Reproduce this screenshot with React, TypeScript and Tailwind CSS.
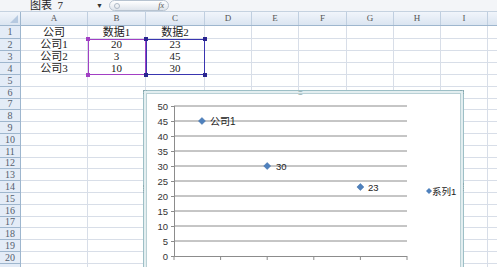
import React from "react";

const cols = [
  { key: "A", w: 67 },
  { key: "B", w: 58 },
  { key: "C", w: 59 },
  { key: "D", w: 47 },
  { key: "E", w: 47 },
  { key: "F", w: 48 },
  { key: "G", w: 47 },
  { key: "H", w: 47 },
  { key: "I", w: 47 },
  { key: "", w: 40 },
];

const rowHeights = [13, 12, 12, 12, 12, 12, 11, 12, 12, 12, 12, 11, 12, 12, 12, 12, 11, 12, 12, 12, 12];

const data: Record<number, string[]> = {
  1: ["公司", "数据1", "数据2"],
  2: ["公司1", "20", "23"],
  3: ["公司2", "3", "45"],
  4: ["公司3", "10", "30"],
};

const cellFont = { fontFamily: '"Liberation Serif", "Noto Sans CJK SC", serif' };

function TopBar() {
  return (
    <div className="flex h-[12px] items-center border-b border-[#c5d2e0] bg-[#f3f5f8]">
      <div className="ml-[30px] w-[62px] text-[11px] leading-none text-[#222]" style={cellFont}>
        图表&nbsp;&nbsp;7
      </div>
      <div className="ml-[4px] text-[7px] leading-none text-[#333]">▼</div>
      <div className="ml-[6px] flex h-[11px] w-[60px] items-center justify-between rounded-full border border-[#b7c3d0] bg-gradient-to-b from-white to-[#dfe5ec] px-[4px]">
        <span className="h-[6px] w-[6px] rounded-full border border-[#aeb9c6]"></span>
        <span className="text-[8px] italic leading-none text-[#555]" style={cellFont}>
          fx
        </span>
      </div>
    </div>
  );
}

function HeaderRow() {
  return (
    <div className="flex h-[14px] border-b border-[#9eb6ce] bg-gradient-to-b from-[#f1f5fb] to-[#dbe5f1]">
      <div className="flex w-[21px] shrink-0 items-end justify-end border-r border-[#9eb6ce] p-[2px]">
        <svg width="8" height="8">
          <polygon points="8,0 8,8 0,8" fill="#b6c9e0" />
        </svg>
      </div>
      {cols.map((c) => (
        <div
          key={c.key || "x"}
          className="flex shrink-0 items-center justify-center border-r border-[#c0cfe0] text-[9px] leading-none text-[#555]"
          style={{ ...cellFont, width: c.w }}
        >
          {c.key}
        </div>
      ))}
    </div>
  );
}

function Rows() {
  return (
    <div>
      {rowHeights.map((h, i) => {
        const r = i + 1;
        const vals = data[r] || [];
        return (
          <div key={r} className="flex" style={{ height: h }}>
            <div
              className="flex w-[21px] shrink-0 items-center justify-center border-b border-r border-[#9eb6ce] bg-[#e4ecf7] text-[10px] leading-none text-[#55606e]"
              style={cellFont}
            >
              {r <= 20 ? r : ""}
            </div>
            {cols.map((c, ci) => (
              <div
                key={ci}
                className="flex shrink-0 items-center justify-center border-b border-r border-[#d8dee8] text-[11px] leading-none text-[#1a1a1a]"
                style={{ ...cellFont, width: c.w }}
              >
                {vals[ci] ?? ""}
              </div>
            ))}
          </div>
        );
      })}
    </div>
  );
}

function Handle({ className }: { className: string }) {
  return <div className={"absolute h-[4px] w-[4px] " + className} />;
}

function Chart() {
  const yv = (v: number) => 163 - 3 * v;
  const xv = (v: number) => 28 + 9.32 * v;
  const grid = [5, 10, 15, 20, 25, 30, 35, 40, 45, 50];
  const font = '"Liberation Sans", "Noto Sans CJK SC", sans-serif';
  const diamond = (x: number, y: number, s = 3.5) =>
    `${x},${y - s} ${x + s},${y} ${x},${y + s} ${x - s},${y}`;
  return (
    <div className="absolute left-[143px] top-[90px] h-[200px] w-[321px] border border-[#9dbfc6] bg-[#e3eef0] p-[2px]">
      <div className="relative h-full w-full border border-[#b9d0d5] bg-white">
        <svg width="316" height="196" className="absolute left-[-1px] top-[-1px]">
          {grid.map((g) => (
            <line key={g} x1="28" x2="261" y1={yv(g)} y2={yv(g)} stroke="#8c8c8c" strokeWidth="1" />
          ))}
          <line x1="28" x2="261" y1="163.5" y2="163.5" stroke="#8c8c8c" />
          <line x1="28.5" x2="28.5" y1="13" y2="164" stroke="#8c8c8c" />
          {[0, ...grid].map((g) => (
            <g key={"y" + g}>
              <line x1="25" x2="28" y1={yv(g) + 0.5} y2={yv(g) + 0.5} stroke="#8c8c8c" />
              <text x="22" y={yv(g) + 3.5} textAnchor="end" fontSize="9.5" fill="#333" fontFamily={font}>
                {g}
              </text>
            </g>
          ))}
          {[0, 5, 10, 15, 20, 25].map((g) => (
            <g key={"x" + g}>
              <line x1={xv(g)} x2={xv(g)} y1="163" y2="167" stroke="#8c8c8c" />
              <text x={xv(g)} y="180" textAnchor="middle" fontSize="9.5" fill="#333" fontFamily={font}>
                {g}
              </text>
            </g>
          ))}
          <polygon points={diamond(xv(3), yv(45))} fill="#4f81bd" stroke="#3f6fa8" strokeWidth="0.5" />
          <text x="64" y={yv(45) + 4} fontSize="10" fill="#222" fontFamily={font}>
            公司1
          </text>
          <polygon points={diamond(xv(10), yv(30))} fill="#4f81bd" stroke="#3f6fa8" strokeWidth="0.5" />
          <text x="130" y={yv(30) + 3.5} fontSize="9.5" fill="#222" fontFamily={font}>
            30
          </text>
          <polygon points={diamond(xv(20), yv(23))} fill="#4f81bd" stroke="#3f6fa8" strokeWidth="0.5" />
          <text x="222" y={yv(23) + 3.5} fontSize="9.5" fill="#222" fontFamily={font}>
            23
          </text>
          <polygon points={diamond(283, 98, 3)} fill="#4f81bd" />
          <text x="286" y="101.5" fontSize="9.5" fill="#222" fontFamily={font}>
            系列1
          </text>
        </svg>
      </div>
      <div className="absolute left-[154px] top-[-2px] text-[7px] leading-none tracking-[-1px] text-[#8aa9b0]">
        ::::
      </div>
      <div className="absolute left-[-1px] top-[94px] h-[8px] w-[2px] border-l border-dotted border-[#8aa9b0]" />
      <div className="absolute right-[-1px] top-[92px] h-[8px] w-[2px] border-r border-dotted border-[#8aa9b0]" />
      <div className="absolute left-[-1px] top-[-1px] h-[4px] w-[4px] border-l border-t border-dotted border-[#8aa9b0]" />
      <div className="absolute right-[-1px] top-[-1px] h-[4px] w-[4px] border-r border-t border-dotted border-[#8aa9b0]" />
    </div>
  );
}

export default function App() {
  return (
    <div className="relative h-[267px] w-[497px] overflow-hidden bg-white">
      <TopBar />
      <HeaderRow />
      <Rows />
      {/* selection ranges */}
      <div className="absolute left-[88px] top-[39px] h-[36px] w-[58px] border border-[#a23fc4]" />
      <div className="absolute left-[146px] top-[39px] h-[36px] w-[59px] border border-[#3a35b0]" />
      <Handle className="left-[86px] top-[37px] bg-[#a23fc4]" />
      <Handle className="left-[86px] top-[73px] bg-[#a23fc4]" />
      <Handle className="left-[144px] top-[37px] bg-[#2a2590]" />
      <Handle className="left-[144px] top-[73px] bg-[#2a2590]" />
      <Handle className="left-[203px] top-[37px] bg-[#2a2590]" />
      <Handle className="left-[203px] top-[73px] bg-[#2a2590]" />
      <Chart />
    </div>
  );
}
